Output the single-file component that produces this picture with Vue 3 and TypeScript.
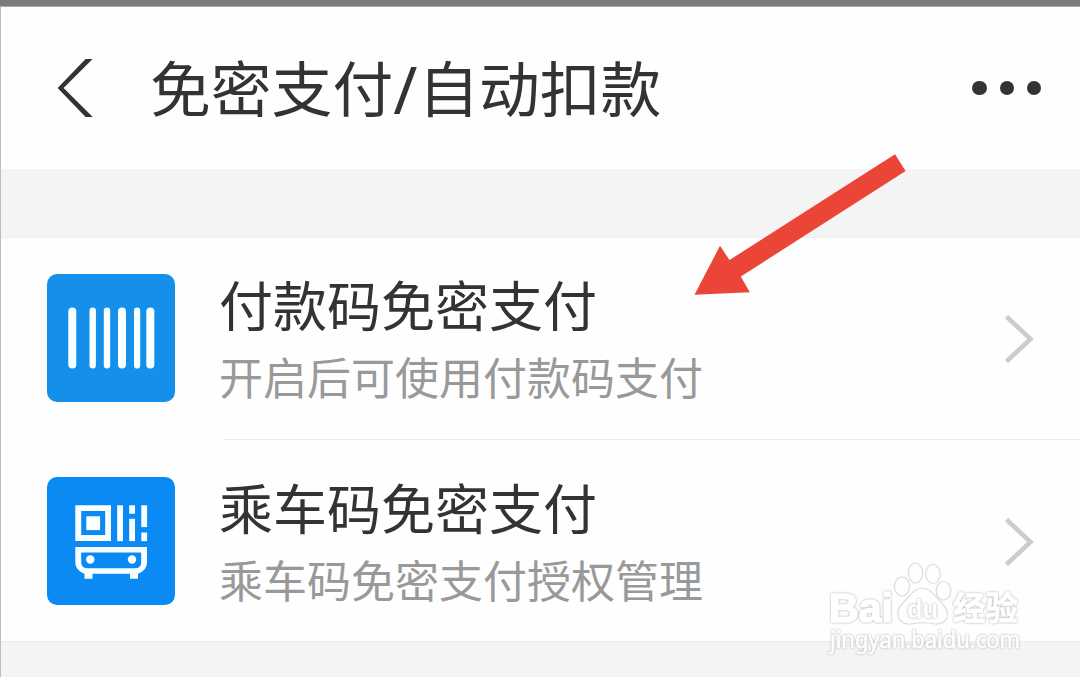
<script setup lang="ts">
interface PayItem {
  icon: 'barcode' | 'transit'
  title: string
  desc: string
}

const items: PayItem[] = [
  { icon: 'barcode', title: '付款码免密支付', desc: '开启后可使用付款码支付' },
  { icon: 'transit', title: '乘车码免密支付', desc: '乘车码免密支付授权管理' },
]

const bars: { x: number; w: number }[] = [
  { x: 21.3, w: 8 },
  { x: 42.5, w: 6.4 },
  { x: 56.8, w: 6.4 },
  { x: 71, w: 8 },
  { x: 87, w: 6.2 },
  { x: 99.3, w: 8 },
]
</script>

<template>
  <div class="screen">
    <div class="status"></div>
    <header class="nav">
      <svg class="back" width="40" height="62" viewBox="0 0 40 62">
        <path d="M32.6 2H39.6L10.6 31 39.8 60H32.6L4.6 31Z" fill="#333" />
      </svg>
      <h1 class="nav-title">免密支付<span class="slash">/</span>自动扣款</h1>
      <div class="more"><i></i><i></i><i></i></div>
    </header>
    <div class="gap"></div>
    <main class="list">
      <section v-for="item in items" :key="item.icon" class="item">
        <svg v-if="item.icon === 'barcode'" class="icon" viewBox="0 0 128 128">
          <rect width="128" height="128" rx="10" fill="#148fea" />
          <rect v-for="b in bars" :key="b.x" :x="b.x" y="33.5" :width="b.w" height="61" :rx="b.w / 2" fill="#f8ffff" />
        </svg>
        <svg v-else class="icon" viewBox="0 0 128 128">
          <rect width="128" height="128" rx="10" fill="#0b8af4" />
          <g fill="#f8ffff">
            <path fill-rule="evenodd" d="M28.3 28.3H64V64.1H28.3ZM34.2 34.1V58.1H58.2V34.1Z" />
            <rect x="39.3" y="39.3" width="13.8" height="13.8" />
            <rect x="70.2" y="28.3" width="5.8" height="35.8" />
            <rect x="82.2" y="28.3" width="5.8" height="8.4" />
            <rect x="82.2" y="41.8" width="5.8" height="22.3" />
            <rect x="94.3" y="28.3" width="5.8" height="21.8" />
            <rect x="94.3" y="55.5" width="5.8" height="8.6" />
            <path fill-rule="evenodd" d="M28.3 70H100V85.5Q100 93.5 91 96.7V101.8H83V96.7H45.5V101.8H37.5V96.7Q28.3 93.5 28.3 85.5ZM34.2 75.5V85.5Q34.2 91.3 41 91.3H87.5Q94.2 91.3 94.2 85.5V75.5Z" />
            <circle cx="43.3" cy="82.5" r="4.2" />
            <circle cx="85" cy="82.5" r="4.2" />
          </g>
        </svg>
        <div class="body">
          <div class="text">
            <div class="title">{{ item.title }}</div>
            <div class="desc">{{ item.desc }}</div>
          </div>
          <svg class="chevron" width="32" height="52" viewBox="0 0 32 52">
            <path d="M3.5 3.5L27.5 26 3.5 48.5" fill="none" stroke="#ccc" stroke-width="4.6" />
          </svg>
        </div>
      </section>
    </main>
    <div class="bottom"></div>

    <svg class="arrow" width="214" height="144" viewBox="0 0 214 144">
      <path d="M201 2.3L211.6 19 46.8 124.5 55.8 140.3 0.5 142.8 26 93.8 35.5 108Z" fill="#ea4537" />
    </svg>

    <svg class="mark" width="220" height="110" viewBox="0 0 220 110">
      <g class="paw">
        <ellipse cx="79" cy="24.5" rx="7.6" ry="9.5" />
        <ellipse cx="92.5" cy="11" rx="7.2" ry="10" />
        <ellipse cx="110" cy="12" rx="7.3" ry="9.5" />
        <ellipse cx="120.5" cy="28.8" rx="7.3" ry="9.3" />
        <path d="M99.5 26C108 26 112 35 119 41C129 52 124 63 112 62Q100 59.5 88 62C75 63 71 51 79 42C87 35 90 26 99.5 26Z" />
      </g>
      <text x="6" y="60" font-size="41" textLength="64" lengthAdjust="spacingAndGlyphs" class="brand">Bai</text>
      <text x="84" y="56" font-size="26" textLength="31" lengthAdjust="spacingAndGlyphs" class="du">du</text>
      <text x="130" y="58" font-size="33" textLength="65" lengthAdjust="spacingAndGlyphs" class="cn">经验</text>
      <text x="7" y="86" font-size="23" textLength="190" lengthAdjust="spacingAndGlyphs" class="url">jingyan.baidu.com</text>
    </svg>
  </div>
</template>

<style>
body {
  margin: 0;
  overflow: hidden;
}
</style>

<style scoped>
.screen {
  position: relative;
  display: flex;
  flex-direction: column;
  width: 1080px;
  height: 677px;
  overflow: hidden;
  background: #fefefe;
  font-family: "Noto Sans CJK SC", sans-serif;
}
.screen::before {
  content: "";
  position: absolute;
  left: 0;
  top: 7px;
  width: 1px;
  height: 670px;
  background: #bcbcbc;
}
.status {
  height: 6px;
  background: #7b7b7b;
  border-bottom: 1px solid #ababab;
}
.nav {
  display: flex;
  align-items: center;
  height: 162px;
  padding: 0 39px 0 53px;
}
.back {
  flex: none;
}
.nav-title {
  flex: 1;
  margin: 0 0 5px 57px;
  font-size: 60.8px;
  line-height: 80px;
  font-weight: 400;
  color: #333;
  white-space: nowrap;
}
.slash {
  display: inline-block;
  width: 25px;
  font-family: "Noto Sans", sans-serif;
  font-size: 65px;
  line-height: 1;
  vertical-align: -2px;
}
.more {
  display: flex;
  gap: 13px;
}
.more i {
  width: 14.2px;
  height: 14.2px;
  border-radius: 50%;
  background: #333;
}
.gap {
  height: 68px;
  margin-left: 1px;
  background: #f4f4f4;
  border-bottom: 1px solid #ededed;
}
.list {
  height: 403px;
}
.item {
  display: flex;
  height: 203px;
  padding-left: 47px;
}
.icon {
  flex: none;
  width: 128px;
  height: 128px;
  margin-top: 36px;
}
.body {
  flex: 1;
  display: flex;
  justify-content: space-between;
  height: 201px;
  margin-left: 48px;
  padding-right: 45px;
  border-bottom: 1px solid #ececec;
}
.item:last-child .body {
  border-bottom: none;
}
.text {
  margin: 30px 0 0 -4px;
}
.title {
  font-size: 54px;
  line-height: 72px;
  color: #333;
  white-space: nowrap;
}
.desc {
  margin-top: 6px;
  font-size: 44px;
  line-height: 60px;
  color: #999;
  white-space: nowrap;
}
.chevron {
  margin-top: 75px;
}
.bottom {
  flex: 1;
  margin-left: 1px;
  background: #f4f4f4;
  border-top: 1px solid #ededed;
}
.arrow {
  position: absolute;
  left: 694px;
  top: 152px;
}
.mark {
  position: absolute;
  left: 823px;
  top: 562px;
}
.mark text {
  fill: #fff;
  stroke: #fff;
  stroke-linejoin: round;
  filter: drop-shadow(0 0 0.8px #aaa);
}
.paw {
  fill: #fefefe;
  stroke: #dcdcdc;
  stroke-width: 1.2;
}
.brand {
  font-family: "Liberation Sans", sans-serif;
  font-weight: 700;
  stroke-width: 1.6;
}
.mark .du {
  font-family: "Liberation Sans", sans-serif;
  font-weight: 700;
  stroke-width: 0;
}
.cn {
  font-family: "Noto Sans CJK SC", sans-serif;
  font-weight: 700;
  stroke-width: 0.8;
}
.mark .url {
  font-family: "Noto Sans", sans-serif;
  stroke-width: 0.6;
}
</style>
